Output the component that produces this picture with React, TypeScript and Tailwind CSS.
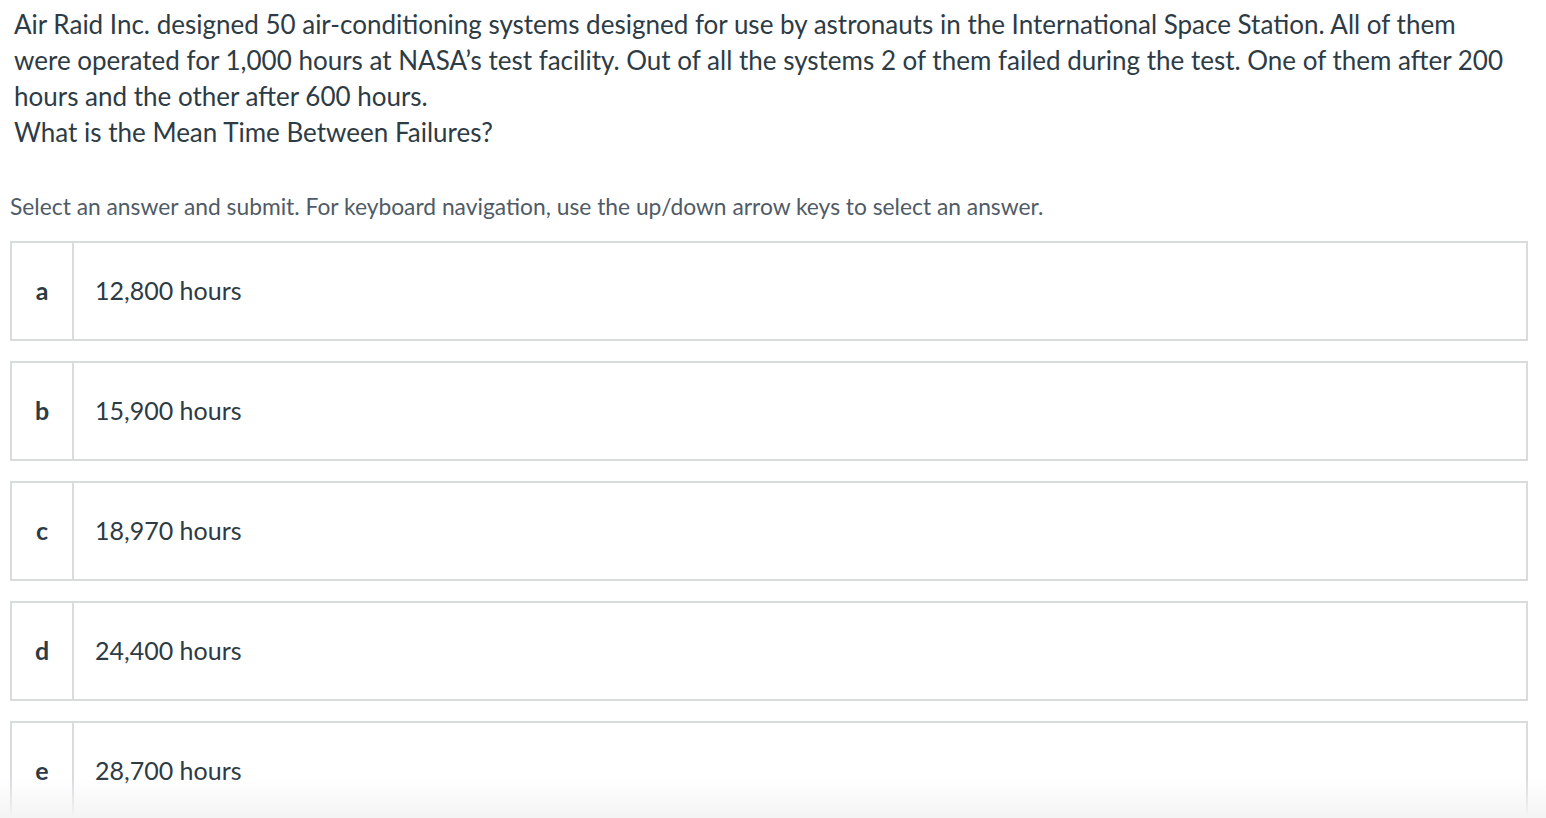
const options = [
  { letter: "a", text: "12,800 hours" },
  { letter: "b", text: "15,900 hours" },
  { letter: "c", text: "18,970 hours" },
  { letter: "d", text: "24,400 hours" },
  { letter: "e", text: "28,700 hours" },
];

const App = () => {
  return (
    <div
      className="relative h-[818px] overflow-hidden bg-white"
      style={{ fontFamily: "Lato, 'Noto Sans', sans-serif" }}
    >
      <div className="pl-[14px] pr-4 pt-[6px] text-[26px] leading-[36px] text-[#2d3b45]">
        <p>
          Air Raid Inc. designed 50 air-conditioning systems designed for use by astronauts in the
          International Space Station. All of them
          <br />
          were operated for 1,000 hours at NASA’s test facility. Out of all the systems 2 of them
          failed during the test. One of them after 200
          <br />
          hours and the other after 600 hours.
        </p>
        <p>What is the Mean Time Between Failures?</p>
      </div>

      <p className="mt-[41px] pl-[10px] text-[22.8px] leading-[30px] text-[#4f5b66]">
        Select an answer and submit. For keyboard navigation, use the up/down arrow keys to select an
        answer.
      </p>

      <div className="ml-[10px] mt-[20px] flex w-[1518px] flex-col gap-[20px]">
        {options.map((o) => (
          <div
            key={o.letter}
            className="flex h-[100px] border-2 border-[#d8dcdf] bg-white cursor-pointer"
          >
            <div className="flex w-[62px] items-center justify-center border-r-2 border-[#d8dcdf] text-[25px] font-bold text-[#2d3b45]">
              {o.letter}
            </div>
            <div className="flex items-center pl-[21px] text-[25px] text-[#2d3b45]">{o.text}</div>
          </div>
        ))}
      </div>

      <div className="pointer-events-none absolute bottom-0 left-0 h-[40px] w-full bg-gradient-to-b from-white/0 to-[#f4f4f4]" />
    </div>
  );
};

export default App;
